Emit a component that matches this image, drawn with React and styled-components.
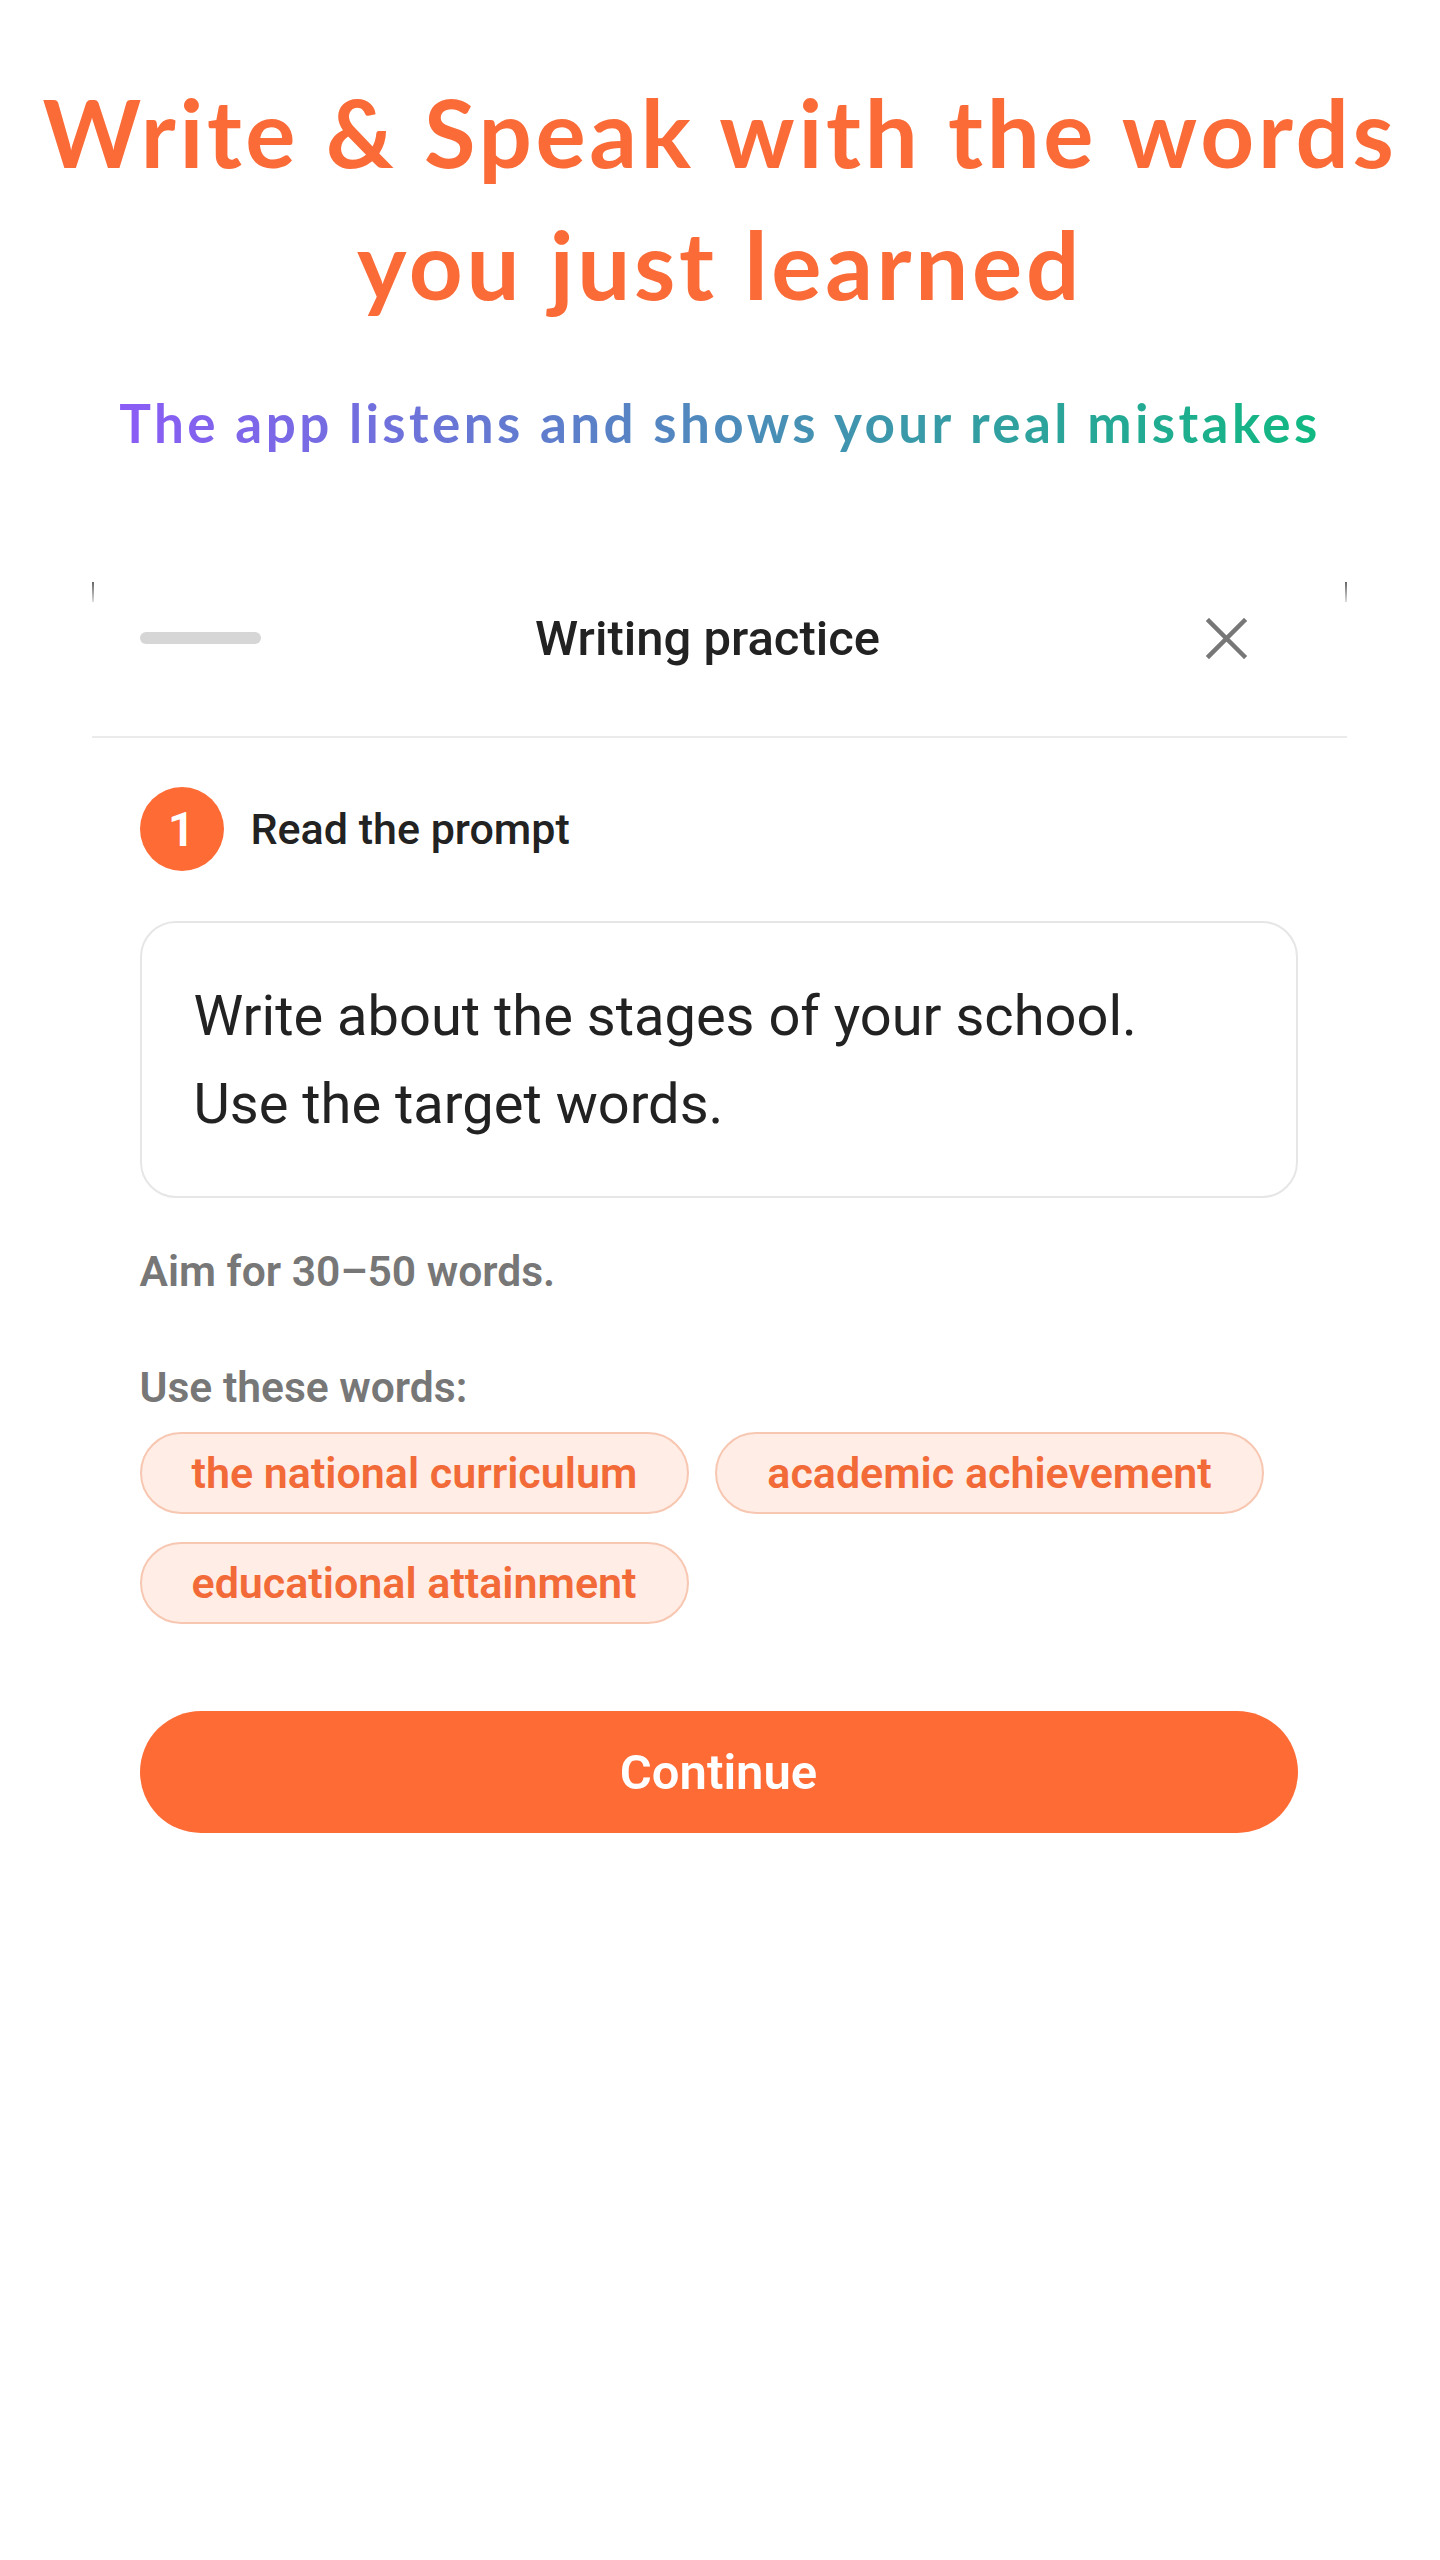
import React from "react";
import styled, { createGlobalStyle } from "styled-components";

const GlobalStyle = createGlobalStyle`
  html, body {
    margin: 0;
    padding: 0;
    background: #ffffff;
  }
  body {
    font-family: Roboto, "Liberation Sans", sans-serif;
  }
`

const Pagina = styled.div`
  width: 1440px;
  min-height: 2560px;
  background: #ffffff;
  display: flex;
  flex-direction: column;
  align-items: center;
`

const Titulo = styled.h1`
  margin: 66px 0 0;
  font-family: Lato, "Open Sans", sans-serif;
  font-weight: 700;
  font-size: 94px;
  line-height: 132px;
  letter-spacing: 3.7px;
  color: #fa6b37;
  text-align: center;
`

const Subtitulo = styled.p`
  margin: 61px 0 0;
  font-family: Lato, "Open Sans", sans-serif;
  font-weight: 700;
  font-size: 53px;
  line-height: 64px;
  letter-spacing: 3.4px;
  text-align: center;
  background: linear-gradient(90deg, #8b5cf6 0%, #10b981 100%);
  -webkit-background-clip: text;
  background-clip: text;
  color: transparent;
`

const Folha = styled.div`
  position: relative;
  width: 1255px;
  margin: 126px 0 0 -2px;
  background: #ffffff;

  &::before,
  &::after {
    content: "";
    position: absolute;
    top: 1px;
    width: 2px;
    height: 20px;
    background: linear-gradient(180deg, #666 0%, #ddd 100%);
  }
  &::before { left: 0; }
  &::after { right: 0; }
`

const Cabecalho = styled.div`
  display: grid;
  grid-template-columns: 1fr auto 1fr;
  align-items: center;
  height: 80px;
  padding: 17px 71px 58px 48px;
  border-bottom: 2px solid #ebebeb;
`

const Alca = styled.div`
  width: 121px;
  height: 12px;
  border-radius: 6px;
  background: #d6d6d6;
`

const TituloFolha = styled.div`
  font-size: 49px;
  font-weight: 500;
  color: #222;
`

const BotaoFechar = styled.button`
  justify-self: end;
  margin-right: 29px;
  width: 41px;
  height: 41px;
  padding: 0;
  border: none;
  background: none;
  display: flex;
  align-items: center;
  justify-content: center;
`

const Conteudo = styled.div`
  padding: 0 49px 0 48px;
  display: flex;
  flex-direction: column;
`

const Passo = styled.div`
  margin-top: 49px;
  display: flex;
  align-items: center;
  gap: 27px;
`

const Circulo = styled.div`
  width: 84px;
  height: 84px;
  border-radius: 50%;
  background: #ff6b35;
  color: #fff;
  font-size: 48px;
  font-weight: 600;
  display: flex;
  align-items: center;
  justify-content: center;
`

const TextoPasso = styled.div`
  font-size: 43px;
  font-weight: 500;
  color: #222;
`

const CaixaPrompt = styled.div`
  margin-top: 50px;
  border: 2px solid #e6e6e6;
  border-radius: 36px;
  padding: 49px 52px 48px;
  font-size: 56px;
  line-height: 88px;
  color: #222;
`

const Dica = styled.div`
  margin-top: ${(p) => p.$topo}px;
  font-size: 42.6px;
  line-height: 48px;
  font-weight: 600;
  color: #777;
`

const ListaPalavras = styled.div`
  margin-top: 21px;
  display: flex;
  flex-wrap: wrap;
  column-gap: 26px;
  row-gap: 28px;
`

const Chip = styled.div`
  height: 82px;
  box-sizing: border-box;
  padding: 0 50px;
  border: 2px solid #f7c7b2;
  border-radius: 41px;
  background: #ffede6;
  color: #f26a38;
  font-size: 43px;
  font-weight: 600;
  display: flex;
  align-items: center;
`

const BotaoContinuar = styled.button`
  margin-top: 87px;
  height: 122px;
  border: none;
  border-radius: 61px;
  background: #ff6b35;
  color: #fff;
  font-family: Roboto, "Liberation Sans", sans-serif;
  font-size: 49px;
  font-weight: 600;
`

const palavras = [
  "the national curriculum",
  "academic achievement",
  "educational attainment",
]

export default function App() {
  return (
    <Pagina>
      <GlobalStyle />
      <Titulo>
        Write &amp; Speak with the words
        <br />
        you just learned
      </Titulo>
      <Subtitulo>The app listens and shows your real mistakes</Subtitulo>

      <Folha>
        <Cabecalho>
          <Alca />
          <TituloFolha>Writing practice</TituloFolha>
          <BotaoFechar aria-label="Fechar">
            <svg width="41" height="41" viewBox="0 0 41 41">
              <path d="M3 3 L38 38 M38 3 L3 38" stroke="#777" strokeWidth="4.5" strokeLinecap="square" />
            </svg>
          </BotaoFechar>
        </Cabecalho>

        <Conteudo>
          <Passo>
            <Circulo>1</Circulo>
            <TextoPasso>Read the prompt</TextoPasso>
          </Passo>

          <CaixaPrompt>
            Write about the stages of your school.
            <br />
            Use the target words.
          </CaixaPrompt>

          <Dica $topo={49}>Aim for 30–50 words.</Dica>
          <Dica $topo={68}>Use these words:</Dica>

          <ListaPalavras>
            {palavras.map((p) => (
              <Chip key={p}>{p}</Chip>
            ))}
          </ListaPalavras>

          <BotaoContinuar>Continue</BotaoContinuar>
        </Conteudo>
      </Folha>
    </Pagina>
  )
}
